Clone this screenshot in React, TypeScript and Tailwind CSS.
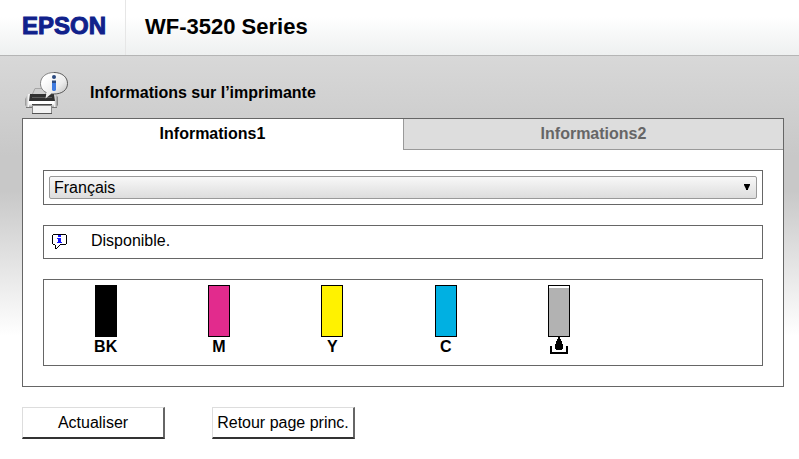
import { useState } from "react";

const inks = [
  { name: "BK", fill: "bg-black" },
  { name: "M", fill: "bg-[#e22b8d]" },
  { name: "Y", fill: "bg-[#fff200]" },
  { name: "C", fill: "bg-[#00b0e2]" },
];

function PrinterIcon() {
  return (
    <svg width="46" height="44" viewBox="0 0 46 44" className="shrink-0" aria-hidden="true">
      <defs>
        <linearGradient id="bubble" x1="0" y1="0" x2="1" y2="1">
          <stop offset="0.2" stopColor="#ffffff" />
          <stop offset="0.6" stopColor="#ececec" />
          <stop offset="1" stopColor="#b0b0b0" />
        </linearGradient>
        <linearGradient id="body" x1="0" y1="0" x2="0" y2="1">
          <stop offset="0.3" stopColor="#ffffff" />
          <stop offset="1" stopColor="#8c8c8c" />
        </linearGradient>
        <linearGradient id="side" x1="0" y1="0" x2="1" y2="0">
          <stop offset="0" stopColor="#8f8f8f" />
          <stop offset="0.12" stopColor="#ffffff" />
          <stop offset="0.88" stopColor="#ffffff" />
          <stop offset="1" stopColor="#777777" />
        </linearGradient>
      </defs>
      {/* rear paper */}
      <path d="M11 16.5 H20 L22 23 H8 Z" fill="#cfcfcf" stroke="#9b9b9b" strokeWidth="0.8" />
      {/* body */}
      <path d="M4 22 H31 L34 25 V33 L32 36 H3 L1 33 V27 Z" fill="url(#side)" />
      <path d="M5 30 H30 V36 H5 Z" fill="url(#body)" />
      <path d="M2 35.5 H33" stroke="#777777" />
      <path d="M6 22 H30 L31 29 H5 Z" fill="#303030" />
      <path d="M8 25.5 H28" stroke="#5c5c5c" />
      <path d="M8 32.5 H28" stroke="#444444" />
      {/* front paper */}
      <path d="M8.5 33.5 H27.5 V41.5 H8.5 Z" fill="#f3f3f3" stroke="#8a8a8a" />
      <path d="M8 41.5 H28" stroke="#555555" />
      {/* speech bubble */}
      <path
        d="M30 0.5 C38 0.5 43.5 5 43.5 11.5 C43.5 18 38 22 30 22 H27 L21.5 26.5 L22.5 20.5 C18.5 19 16.5 15.5 16.5 11.5 C16.5 5 22 0.5 30 0.5 Z"
        fill="url(#bubble)"
      />
      <path d="M30 0.5 C38 0.5 43.5 5 43.5 11.5 C43.5 18 38 22 30 22 H27" fill="none" stroke="#4a4a4a" strokeWidth="0.9" />
      <path d="M30 0.5 C22 0.5 16.5 5 16.5 11.5 C16.5 15.5 18.5 19 22.5 20.5" fill="none" stroke="#777777" strokeWidth="0.9" />
      <circle cx="30" cy="5" r="2" fill="#2b4a80" />
      <path d="M28 9 H32 V18 L31 19 H29 L28 18 Z" fill="#3f7be0" />
      <path d="M28 8.5 H32 V11 H28 Z" fill="#2b4a80" />
    </svg>
  );
}

function StatusIcon() {
  return (
    <svg width="15" height="16" viewBox="0 0 15 16" shapeRendering="crispEdges" className="shrink-0" aria-hidden="true">
      <path d="M1 0H14V1H1ZM0 1H1V10H0ZM14 1H15V10H14ZM1 10H3V11H1ZM8 10H14V11H8ZM3 11H4V15H3ZM7 11H8V12H7ZM6 12H7V13H6ZM5 13H6V14H5ZM4 14H5V15H4Z" fill="#000000" />
      <path d="M6 1H9V3H6ZM5 4H9V8H10V9H5V8H6V5H5Z" fill="#1414ff" />
    </svg>
  );
}

function MaintenanceIcon() {
  return (
    <svg width="18" height="17" viewBox="0 0 18 17" shapeRendering="crispEdges" aria-hidden="true">
      <path d="M8 0H10V2H11V4H12V7H13V12H12V13H6V12H5V7H6V4H7V2H8Z" fill="#000000" />
      <path d="M0 9H2V15H16V9H18V17H0Z" fill="#000000" />
    </svg>
  );
}

export default function App() {
  const [tab, setTab] = useState(1);
  const [language, setLanguage] = useState("fr");

  const activeTab = "bg-white text-black border-transparent";
  const idleTab = "bg-[#dddddd] text-[#666666] border-[#999999]";
  const button =
    "w-[143px] h-8 bg-white whitespace-nowrap border border-r-2 border-b-2 border-t-[#dddddd] border-l-[#dddddd] border-r-[#666666] border-b-[#333333]";

  return (
    <div className="min-h-screen bg-white font-['Liberation_Sans',Arial,sans-serif] text-base leading-5 text-black">
      <header className="flex h-14 items-stretch border-b border-[#b5b5b5] bg-linear-to-b from-white from-30% to-[#eef0f0]">
        <div className="flex w-[126px] items-center border-r border-[#e6e6e6] pl-[22px] pb-1">
          <span className="text-2xl font-bold text-[#10218b] [-webkit-text-stroke:1px_#10218b]">EPSON</span>
        </div>
        <h1 className="flex items-center pl-[19px] pb-[2px] text-[22px] font-bold">WF-3520 Series</h1>
      </header>

      <main className="bg-[linear-gradient(to_bottom,#d8d8d8_0px,#c8c8c8_100px,#c8c8c8_135px,#ffffff_280px)] pl-[22px] pr-[15px] pt-4">
        <div className="flex h-[46px] items-start gap-5 pl-[2px]">
          <PrinterIcon />
          <h2 className="pt-[11px] font-bold">Informations sur l’imprimante</h2>
        </div>

        <section className="border border-[#666666] bg-white">
          <div className="grid grid-cols-2" role="tablist">
            <button
              role="tab"
              aria-selected={tab === 1}
              onClick={() => setTab(1)}
              className={`h-[31px] border-b border-r font-bold ${tab === 1 ? activeTab : idleTab}`}
            >
              Informations1
            </button>
            <button
              role="tab"
              aria-selected={tab === 2}
              onClick={() => setTab(2)}
              className={`h-[31px] border-b border-l font-bold ${tab === 2 ? activeTab : idleTab}`}
            >
              Informations2
            </button>
          </div>

          <div className="flex flex-col gap-5 p-5">
            <div className="border border-[#666666] p-[5px]">
              <div className="grid items-center">
                <select
                  aria-label="Langue"
                  value={language}
                  onChange={(e) => setLanguage(e.target.value)}
                  className="col-start-1 row-start-1 h-[23px] w-full appearance-none rounded-xs border border-[#999999] bg-linear-to-b from-[#f8f8f8] to-[#dddddd] px-1 leading-5"
                >
                  <option value="fr">Français</option>
                  <option value="en">English</option>
                </select>
                <svg width="6" height="7" viewBox="0 0 6 7" className="pointer-events-none col-start-1 row-start-1 mr-[7px] justify-self-end" aria-hidden="true">
                  <path d="M0 0H6V1L4 5V6H2V5L0 1Z" fill="#000000" />
                </svg>
              </div>
            </div>

            <div className="flex h-[34px] items-center gap-6 border border-[#666666] pl-2">
              <StatusIcon />
              <p className="pb-[2px]">Disponible.</p>
            </div>

            <ul className="grid h-[87px] grid-cols-6 border border-[#666666] pl-[5px] pr-[33px] pt-[5px] text-center font-bold">
              {inks.map((ink) => (
                <li key={ink.name} className="flex flex-col items-center">
                  <div className={`h-[52px] w-[22px] border border-black ${ink.fill}`} />
                  <span>{ink.name}</span>
                </li>
              ))}
              <li className="flex flex-col items-center">
                <div className="h-[52px] w-[22px] border border-black bg-[#b2b2b2]">
                  <div className="h-[2px] bg-white" />
                </div>
                <MaintenanceIcon />
              </li>
            </ul>
          </div>
        </section>

        <div className="flex gap-[47px] pt-5">
          <button className={button}>Actualiser</button>
          <button className={button}>Retour page princ.</button>
        </div>
      </main>
    </div>
  );
}
